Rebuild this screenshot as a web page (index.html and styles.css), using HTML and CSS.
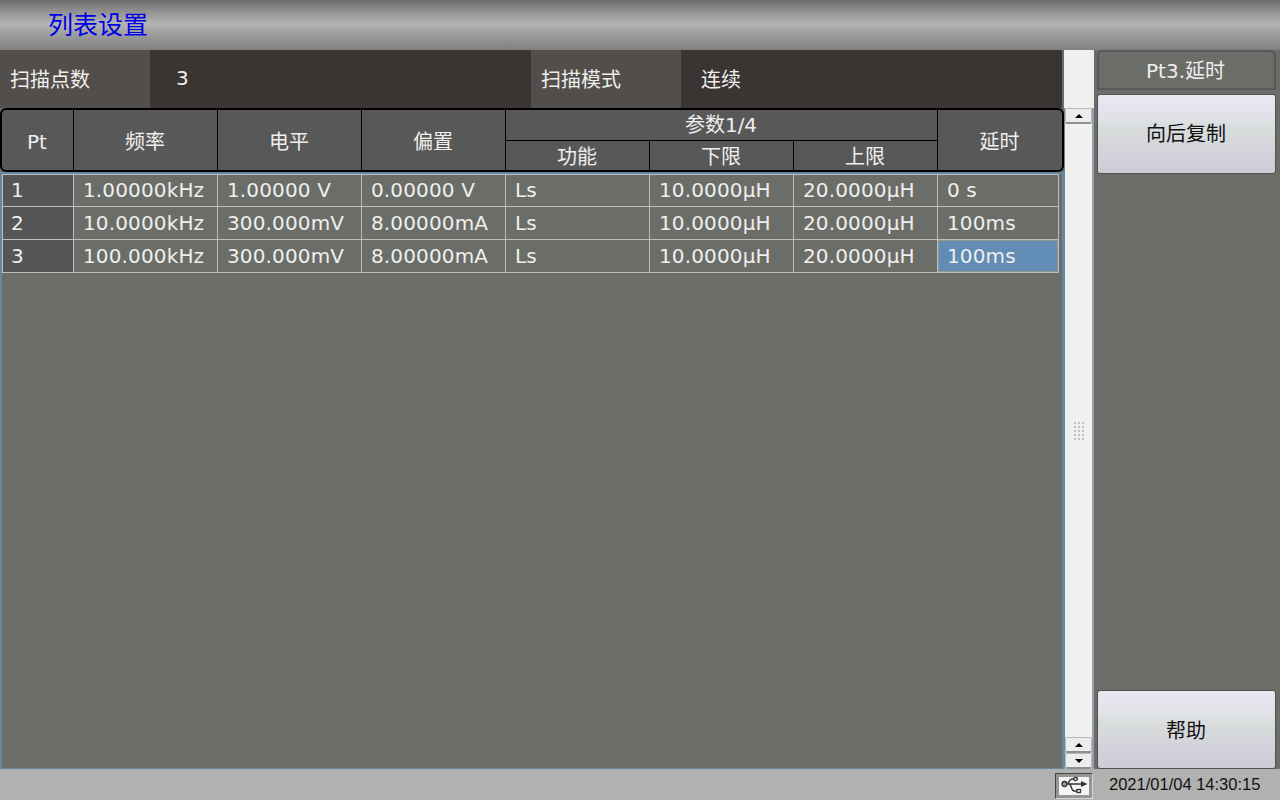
FILE: index.html
```html
<!DOCTYPE html>
<html lang="zh">
<head>
<meta charset="utf-8">
<title>列表设置</title>
<link rel="stylesheet" href="styles.css">
</head>
<body>
<div class="screen">
  <header class="titlebar"><span class="title">列表设置</span></header>
  <div class="middle">
    <main class="main">
      <div class="summary">
        <div class="sum-label">扫描点数</div>
        <div class="sum-value sum-value-a">3</div>
        <div class="sum-label">扫描模式</div>
        <div class="sum-value sum-value-b">连续</div>
      </div>
      <div class="thead">
        <div class="th th-tall">Pt</div>
        <div class="th th-tall">频率</div>
        <div class="th th-tall">电平</div>
        <div class="th th-tall">偏置</div>
        <div class="th th-group">参数1/4</div>
        <div class="th th-tall th-last">延时</div>
        <div class="th th-sub">功能</div>
        <div class="th th-sub">下限</div>
        <div class="th th-sub">上限</div>
      </div>
      <div class="tbody-frame">
        <div class="tbody">
          <div class="td td-pt">1</div><div class="td">1.00000kHz</div><div class="td">1.00000 V</div><div class="td">0.00000 V</div><div class="td">Ls</div><div class="td">10.0000µH</div><div class="td">20.0000µH</div><div class="td">0 s</div>
          <div class="td td-pt">2</div><div class="td">10.0000kHz</div><div class="td">300.000mV</div><div class="td">8.00000mA</div><div class="td">Ls</div><div class="td">10.0000µH</div><div class="td">20.0000µH</div><div class="td">100ms</div>
          <div class="td td-pt">3</div><div class="td">100.000kHz</div><div class="td">300.000mV</div><div class="td">8.00000mA</div><div class="td">Ls</div><div class="td">10.0000µH</div><div class="td">20.0000µH</div><div class="td td-active">100ms</div>
        </div>
      </div>
    </main>
    <div class="scrollbar">
      <div class="scroll-head"></div>
      <div class="scroll-body">
        <div class="scroll-btn"><span class="arrow-up"></span></div>
        <div class="scroll-track"><span class="grip"></span></div>
        <div class="scroll-btn"><span class="arrow-up"></span></div>
        <div class="scroll-btn"><span class="arrow-down"></span></div>
      </div>
    </div>
    <aside class="side">
      <div class="side-label">Pt3.延时</div>
      <button class="side-btn">向后复制</button>
      <div class="side-fill"></div>
      <button class="side-btn side-btn-help">帮助</button>
    </aside>
  </div>
  <footer class="status">
    <div class="usb">
      <svg width="30" height="20" viewBox="0 0 30 20">
        <path class="usb-line" d="M5 8H25M8 8C10 8 10 3 13 3H15M10 8C12.500 8 12 15 15 15H18"/>
        <circle class="usb-hollow-dark" cx="5.500" cy="8" r="2.500"/>
        <ellipse class="usb-hollow" cx="16.500" cy="3" rx="2" ry="1.500"/>
        <rect class="usb-hollow" x="18" y="13.500" width="3.500" height="3"/>
        <path class="usb-fill" d="M22 5L28.500 8L22 11Z"/>
      </svg>
    </div>
    <div class="clock">2021/01/04 14:30:15</div>
  </footer>
</div>
</body>
</html>
```
FILE: styles.css
```css
* { box-sizing: border-box; }
html, body { margin: 0; padding: 0; }
body {
  width: 1280px;
  height: 800px;
  overflow: hidden;
  font-family: "DejaVu Sans", "Noto Sans CJK SC", sans-serif;
  font-size: 20px;
  color: #efefed;
  background: #6b6d69;
}
.screen { display: flex; flex-direction: column; width: 1280px; height: 800px; }

.titlebar {
  flex: 0 0 50px;
  padding: 2px 0 0 48px;
  display: flex;
  align-items: center;
  background: linear-gradient(#6e6e6e 0%, #8f8f8f 22%, #b4b4b4 48%, #a4a4a4 62%, #7f7f7f 100%);
}
.title { font-size: 25px; color: #0000e6; line-height: 30px; }

.middle { flex: 0 0 719px; display: flex; }
.main {
  flex: 0 0 1064px;
  display: flex;
  flex-direction: column;
  background: #6b6d69;
}

.summary {
  flex: 0 0 58px;
  margin-right: 2px;
  display: grid;
  grid-template-columns: 150px 381px 150px 1fr;
  align-items: stretch;
}
.sum-label {
  background: #524e4b;
  padding: 0 0 2px 10px;
  display: flex;
  align-items: center;
}
.sum-value {
  background: #3a3532;
  padding-bottom: 2px;
  display: flex;
  align-items: center;
}
.sum-value-a { padding-left: 26px; }
.sum-value-b { padding-left: 20px; }

.thead {
  flex: 0 0 64px;
  display: grid;
  grid-template-columns: 71px 143px 143px 143px 143px 143px 143px 1fr;
  grid-template-rows: 30px 29px;
  gap: 1px;
  background: #000;
  border: 2px solid #000;
  border-radius: 6px;
}
.th {
  background: #585858;
  display: flex;
  align-items: center;
  justify-content: center;
  line-height: 20px;
}
.th-tall { grid-row: span 2; padding: 3px 1px 0 0; }
.th-sub { padding: 3px 1px 0 0; }
.th-group { grid-column: span 3; padding-right: 1px; }
.thead .th:first-child { border-radius: 4px 0 0 4px; }
.th-last { border-radius: 0 4px 4px 0; }

.tbody-frame {
  flex: 1 1 auto;
  border-left: 2px solid #66889f;
  border-right: 2px solid #66889f;
  border-bottom: 1px solid #66889f;
  border-top: 2px solid #66889f;
  padding-right: 3px;
}
.tbody {
  display: grid;
  grid-template-columns: 70px 143px 143px 143px 143px 143px 143px 1fr;
  grid-template-rows: 31px 32px 32px;
  gap: 1px;
  padding: 1px;
  background: #bdbdbd;
}
.td {
  background: #6b6d69;
  padding: 0 0 1px 9px;
  display: flex;
  align-items: center;
  white-space: nowrap;
  letter-spacing: 0.14px;
}
.td-pt { background: #565656; padding-left: 8px; }
.td-active { background: #618cb5; outline: 1px dotted #c0a070; outline-offset: -1px; }

.scrollbar {
  flex: 0 0 30px;
  display: flex;
  flex-direction: column;
  background: #f0f0f0;
}
.scroll-head { flex: 0 0 58px; }
.scroll-body {
  flex: 1 1 auto;
  display: flex;
  flex-direction: column;
  border-left: 1px solid #66889f;
  border-right: 2px solid #9a9ea6;
}
.scroll-btn {
  flex: 0 0 16px;
  display: flex;
  align-items: center;
  justify-content: center;
  background: #ececec;
  border: 1px solid #b8b8b8;
  border-bottom-width: 2px;
  border-bottom-color: #8f8f8f;
  border-radius: 2px;
}
.scroll-track {
  flex: 1 1 auto;
  display: flex;
  align-items: center;
  justify-content: center;
}
.grip {
  width: 12px;
  height: 20px;
  background-image: radial-gradient(#c0c0c0 0, #c0c0c0 1px, transparent 1px);
  background-size: 4px 4px;
}
.arrow-up, .arrow-down {
  width: 0;
  height: 0;
  border-left: 4px solid transparent;
  border-right: 4px solid transparent;
}
.arrow-up { border-bottom: 4px solid #000; }
.arrow-down { border-top: 4px solid #000; }

.side {
  flex: 0 0 186px;
  padding: 0 4px 0 3px;
  display: flex;
  flex-direction: column;
  background: #6b6d69;
}
.side-label {
  flex: 0 0 40px;
  border: 2px solid #575957;
  border-radius: 6px 6px 0 0;
  padding: 0 2px 2px 0;
  display: flex;
  align-items: center;
  justify-content: center;
}
.side-btn {
  flex: 0 0 80px;
  margin-top: 4px;
  padding: 0 1px 3px 0;
  font-family: inherit;
  font-size: 20px;
  color: #111;
  border: 1px solid #50524f;
  border-radius: 3px;
  background: linear-gradient(#e8e8f0 0%, #e2e3ea 25%, #d8dcdc 45%, #d4d4dc 70%, #cccdd4 100%);
}
.side-fill { flex: 1 1 auto; }
.side-btn-help { flex: 0 0 79px; margin-top: 0; padding-bottom: 1px; }

.status {
  flex: 0 0 31px;
  display: flex;
  align-items: center;
  background: #b1b1b1;
  padding-left: 1055px;
}
.usb {
  flex: 0 0 38px;
  height: 26px;
  margin-top: 2px;
  background: #f4f4f4;
  border: 1px solid;
  border-color: #444 #d6d6d6 #d6d6d6 #444;
  box-shadow: inset 0 0 0 3px #959595;
  display: flex;
  align-items: center;
  justify-content: center;
}
.usb-line { fill: none; stroke: #333; stroke-width: 1.400; }
.usb-fill { fill: #333; }
.usb-hollow { fill: #f4f4f4; stroke: #333; stroke-width: 1.300; }
.usb-hollow-dark { fill: #999; stroke: #333; stroke-width: 1.300; }
.clock {
  margin-left: 16px;
  font-family: "Liberation Sans", sans-serif;
  font-size: 16.5px;
  color: #111;
  white-space: nowrap;
}
```
